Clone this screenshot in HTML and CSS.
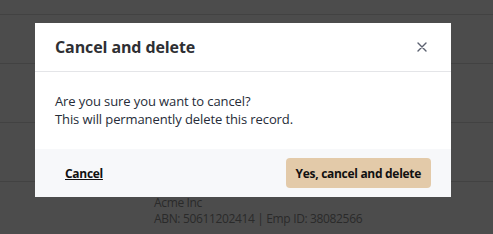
FILE: index.html
```html
<!DOCTYPE html>
<html lang="en">
<head>
    <meta charset="UTF-8">
    <meta name="viewport" content="width=device-width, initial-scale=1.0">
    <title>Cancel and delete</title>
    <link rel="stylesheet" href="styles.css">
</head>
<body>
    <div class="page">
        <div class="row row-head"></div>
        <div class="row row-short"></div>
        <div class="row"></div>
        <div class="row"></div>
        <div class="row-company">
            <p class="company">Acme Inc</p>
            <p class="company-meta">ABN: 50611202414 | Emp ID: 38082566</p>
        </div>
    </div>

    <div class="overlay"></div>

    <div class="modal">
        <div class="modal-header">
            <h2 class="modal-title">Cancel and delete</h2>
            <button class="close" aria-label="Close">
                <svg width="10" height="10" viewBox="0 0 10 10">
                    <path d="M1 1 L9 9 M9 1 L1 9" stroke="#5b6170" stroke-width="1.4" stroke-linecap="round"/>
                </svg>
            </button>
        </div>
        <div class="modal-body">
            <p>Are you sure you want to cancel?</p>
            <p>This will permanently delete this record.</p>
        </div>
        <div class="modal-footer">
            <a href="#" class="link-cancel">Cancel</a>
            <button class="btn-confirm">Yes, cancel and delete</button>
        </div>
    </div>
</body>
</html>
```

FILE: styles.css
```css
* {
    margin: 0;
    padding: 0;
    box-sizing: border-box;
}
body {
    font-family: "Open Sans", "Liberation Sans", sans-serif;
    background: #fff;
    width: 493px;
    height: 234px;
    overflow: hidden;
}

.page {
    display: flex;
    flex-direction: column;
}
.row {
    height: 59px;
    flex-shrink: 0;
    border-bottom: 1px solid #dcdcdc;
}
.row-head {
    height: 15px;
}
.row-short {
    height: 49px;
}
.row-company {
    padding: 13px 0 0 154px;
    font-size: 12px;
    line-height: 16px;
    letter-spacing: -0.35px;
    color: #8e8e8e;
}

.overlay {
    position: fixed;
    inset: 0;
    background: rgba(0, 0, 0, 0.7);
}

.modal {
    position: absolute;
    top: 23px;
    left: 35px;
    width: 416px;
    background: #fff;
}
.modal-header {
    display: flex;
    justify-content: space-between;
    align-items: center;
    height: 49px;
    padding: 0 24px 0 20px;
    border-bottom: 1px solid #e4e5e8;
}
.modal-title {
    font-size: 16px;
    font-weight: 700;
    letter-spacing: -0.1px;
    color: #2e2f33;
}
.close {
    display: flex;
    background: none;
    border: none;
    cursor: pointer;
}

.modal-body {
    padding: 20px 20px 21px;
    font-size: 13px;
    line-height: 18px;
    letter-spacing: -0.1px;
    color: #262c38;
}

.modal-footer {
    display: flex;
    justify-content: space-between;
    align-items: center;
    height: 48px;
    padding: 0 20px 0 30px;
    background: #f7f8fa;
}
.link-cancel {
    font-size: 12px;
    font-weight: 700;
    letter-spacing: -0.3px;
    color: #111;
}
.btn-confirm {
    font-family: inherit;
    font-size: 12px;
    font-weight: 700;
    letter-spacing: -0.3px;
    color: #111;
    background: #e3caa9;
    border: none;
    border-radius: 4px;
    height: 30px;
    padding: 0 10px;
    cursor: pointer;
}
```
